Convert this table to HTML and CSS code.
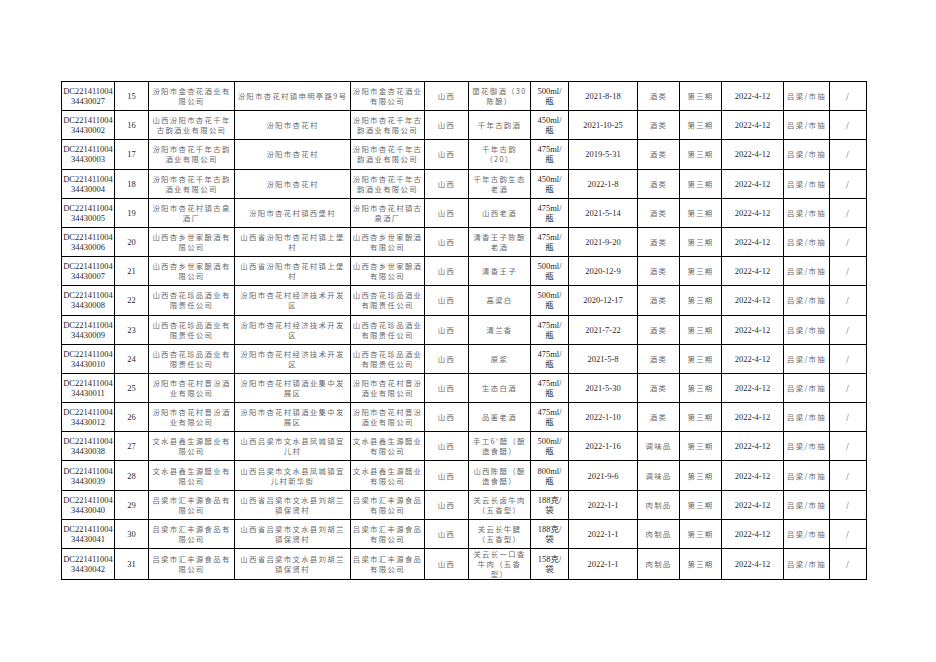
FILE: index.html
```html
<!DOCTYPE html>
<html lang="zh">
<head>
<meta charset="utf-8">
<title>抽检结果</title>
<link rel="stylesheet" href="styles.css">
</head>
<body>
<div class="page">
<table class="grid">
<colgroup>
<col class="w-code"><col class="w-seq"><col class="w-firm"><col class="w-addr"><col class="w-maker"><col class="w-prov"><col class="w-prod"><col class="w-spec"><col class="w-date"><col class="w-cat"><col class="w-per"><col class="w-chk"><col class="w-src"><col class="w-rem">
</colgroup>
<tbody>
<tr>
<td class="n">DC221411004<br>34430027</td><td class="n">15</td>
<td class="c">汾阳市金杏花酒业有<br>限公司</td><td class="c">汾阳市杏花村镇申明亭路9号</td><td class="c">汾阳市金杏花酒业<br>有限公司</td><td class="c">山西</td>
<td class="c">蘭花御酒（30<br>陈酿）</td><td class="n">500ml/<br>瓶</td><td class="n">2021-8-18</td><td class="c">酒类</td><td class="c">第三期</td><td class="n">2022-4-12</td><td class="c">吕梁/市抽</td><td class="c">/</td>
</tr>
<tr>
<td class="n">DC221411004<br>34430002</td><td class="n">16</td>
<td class="c">山西汾阳市杏花千年<br>古韵酒业有限公司</td><td class="c">汾阳市杏花村</td><td class="c">汾阳市杏花千年古<br>韵酒业有限公司</td><td class="c">山西</td>
<td class="c">千年古韵酒</td><td class="n">450ml/<br>瓶</td><td class="n">2021-10-25</td><td class="c">酒类</td><td class="c">第三期</td><td class="n">2022-4-12</td><td class="c">吕梁/市抽</td><td class="c">/</td>
</tr>
<tr>
<td class="n">DC221411004<br>34430003</td><td class="n">17</td>
<td class="c">汾阳市杏花千年古韵<br>酒业有限公司</td><td class="c">汾阳市杏花村</td><td class="c">汾阳市杏花千年古<br>韵酒业有限公司</td><td class="c">山西</td>
<td class="c">千年古韵<br>（20）</td><td class="n">475ml/<br>瓶</td><td class="n">2019-5-31</td><td class="c">酒类</td><td class="c">第三期</td><td class="n">2022-4-12</td><td class="c">吕梁/市抽</td><td class="c">/</td>
</tr>
<tr>
<td class="n">DC221411004<br>34430004</td><td class="n">18</td>
<td class="c">汾阳市杏花千年古韵<br>酒业有限公司</td><td class="c">汾阳市杏花村</td><td class="c">汾阳市杏花千年古<br>韵酒业有限公司</td><td class="c">山西</td>
<td class="c">千年古韵生态<br>老酒</td><td class="n">450ml/<br>瓶</td><td class="n">2022-1-8</td><td class="c">酒类</td><td class="c">第三期</td><td class="n">2022-4-12</td><td class="c">吕梁/市抽</td><td class="c">/</td>
</tr>
<tr>
<td class="n">DC221411004<br>34430005</td><td class="n">19</td>
<td class="c">汾阳市杏花村镇古泉<br>酒厂</td><td class="c">汾阳市杏花村镇西堡村</td><td class="c">汾阳市杏花村镇古<br>泉酒厂</td><td class="c">山西</td>
<td class="c">山西老酒</td><td class="n">475ml/<br>瓶</td><td class="n">2021-5-14</td><td class="c">酒类</td><td class="c">第三期</td><td class="n">2022-4-12</td><td class="c">吕梁/市抽</td><td class="c">/</td>
</tr>
<tr>
<td class="n">DC221411004<br>34430006</td><td class="n">20</td>
<td class="c">山西杏乡世家酿酒有<br>限公司</td><td class="c">山西省汾阳市杏花村镇上堡<br>村</td><td class="c">山西杏乡世家酿酒<br>有限公司</td><td class="c">山西</td>
<td class="c">清香王子陈酿<br>老酒</td><td class="n">475ml/<br>瓶</td><td class="n">2021-9-20</td><td class="c">酒类</td><td class="c">第三期</td><td class="n">2022-4-12</td><td class="c">吕梁/市抽</td><td class="c">/</td>
</tr>
<tr>
<td class="n">DC221411004<br>34430007</td><td class="n">21</td>
<td class="c">山西杏乡世家酿酒有<br>限公司</td><td class="c">山西省汾阳市杏花村镇上堡<br>村</td><td class="c">山西杏乡世家酿酒<br>有限公司</td><td class="c">山西</td>
<td class="c">清香王子</td><td class="n">500ml/<br>瓶</td><td class="n">2020-12-9</td><td class="c">酒类</td><td class="c">第三期</td><td class="n">2022-4-12</td><td class="c">吕梁/市抽</td><td class="c">/</td>
</tr>
<tr>
<td class="n">DC221411004<br>34430008</td><td class="n">22</td>
<td class="c">山西杏花珍品酒业有<br>限责任公司</td><td class="c">汾阳市杏花村经济技术开发<br>区</td><td class="c">山西杏花珍品酒业<br>有限责任公司</td><td class="c">山西</td>
<td class="c">高粱白</td><td class="n">500ml/<br>瓶</td><td class="n">2020-12-17</td><td class="c">酒类</td><td class="c">第三期</td><td class="n">2022-4-12</td><td class="c">吕梁/市抽</td><td class="c">/</td>
</tr>
<tr>
<td class="n">DC221411004<br>34430009</td><td class="n">23</td>
<td class="c">山西杏花珍品酒业有<br>限责任公司</td><td class="c">汾阳市杏花村经济技术开发<br>区</td><td class="c">山西杏花珍品酒业<br>有限责任公司</td><td class="c">山西</td>
<td class="c">清兰香</td><td class="n">475ml/<br>瓶</td><td class="n">2021-7-22</td><td class="c">酒类</td><td class="c">第三期</td><td class="n">2022-4-12</td><td class="c">吕梁/市抽</td><td class="c">/</td>
</tr>
<tr>
<td class="n">DC221411004<br>34430010</td><td class="n">24</td>
<td class="c">山西杏花珍品酒业有<br>限责任公司</td><td class="c">汾阳市杏花村经济技术开发<br>区</td><td class="c">山西杏花珍品酒业<br>有限责任公司</td><td class="c">山西</td>
<td class="c">原浆</td><td class="n">475ml/<br>瓶</td><td class="n">2021-5-8</td><td class="c">酒类</td><td class="c">第三期</td><td class="n">2022-4-12</td><td class="c">吕梁/市抽</td><td class="c">/</td>
</tr>
<tr>
<td class="n">DC221411004<br>34430011</td><td class="n">25</td>
<td class="c">汾阳市杏花村晋汾酒<br>业有限公司</td><td class="c">汾阳市杏花村镇酒业集中发<br>展区</td><td class="c">汾阳市杏花村晋汾<br>酒业有限公司</td><td class="c">山西</td>
<td class="c">生态白酒</td><td class="n">475ml/<br>瓶</td><td class="n">2021-5-30</td><td class="c">酒类</td><td class="c">第三期</td><td class="n">2022-4-12</td><td class="c">吕梁/市抽</td><td class="c">/</td>
</tr>
<tr>
<td class="n">DC221411004<br>34430012</td><td class="n">26</td>
<td class="c">汾阳市杏花村晋汾酒<br>业有限公司</td><td class="c">汾阳市杏花村镇酒业集中发<br>展区</td><td class="c">汾阳市杏花村晋汾<br>酒业有限公司</td><td class="c">山西</td>
<td class="c">品鉴老酒</td><td class="n">475ml/<br>瓶</td><td class="n">2022-1-10</td><td class="c">酒类</td><td class="c">第三期</td><td class="n">2022-4-12</td><td class="c">吕梁/市抽</td><td class="c">/</td>
</tr>
<tr>
<td class="n">DC221411004<br>34430038</td><td class="n">27</td>
<td class="c">文水县鑫生源醋业有<br>限公司</td><td class="c">山西吕梁市文水县凤城镇宜<br>儿村</td><td class="c">文水县鑫生源醋业<br>有限公司</td><td class="c">山西</td>
<td class="c">手工6°醋（酿<br>造食醋）</td><td class="n">500ml/<br>瓶</td><td class="n">2022-1-16</td><td class="c">调味品</td><td class="c">第三期</td><td class="n">2022-4-12</td><td class="c">吕梁/市抽</td><td class="c">/</td>
</tr>
<tr>
<td class="n">DC221411004<br>34430039</td><td class="n">28</td>
<td class="c">文水县鑫生源醋业有<br>限公司</td><td class="c">山西吕梁市文水县凤城镇宜<br>儿村新华街</td><td class="c">文水县鑫生源醋业<br>有限公司</td><td class="c">山西</td>
<td class="c">山西陈醋（酿<br>造食醋）</td><td class="n">800ml/<br>瓶</td><td class="n">2021-9-6</td><td class="c">调味品</td><td class="c">第三期</td><td class="n">2022-4-12</td><td class="c">吕梁/市抽</td><td class="c">/</td>
</tr>
<tr>
<td class="n">DC221411004<br>34430040</td><td class="n">29</td>
<td class="c">吕梁市汇丰源食品有<br>限公司</td><td class="c">山西省吕梁市文水县刘胡兰<br>镇保贤村</td><td class="c">吕梁市汇丰源食品<br>有限公司</td><td class="c">山西</td>
<td class="c">关云长卤牛肉<br>（五香型）</td><td class="n">188克/<br>袋</td><td class="n">2022-1-1</td><td class="c">肉制品</td><td class="c">第三期</td><td class="n">2022-4-12</td><td class="c">吕梁/市抽</td><td class="c">/</td>
</tr>
<tr>
<td class="n">DC221411004<br>34430041</td><td class="n">30</td>
<td class="c">吕梁市汇丰源食品有<br>限公司</td><td class="c">山西省吕梁市文水县刘胡兰<br>镇保贤村</td><td class="c">吕梁市汇丰源食品<br>有限公司</td><td class="c">山西</td>
<td class="c">关云长牛腱<br>（五香型）</td><td class="n">188克/<br>袋</td><td class="n">2022-1-1</td><td class="c">肉制品</td><td class="c">第三期</td><td class="n">2022-4-12</td><td class="c">吕梁/市抽</td><td class="c">/</td>
</tr>
<tr class="tall">
<td class="n">DC221411004<br>34430042</td><td class="n">31</td>
<td class="c">吕梁市汇丰源食品有<br>限公司</td><td class="c">山西省吕梁市文水县刘胡兰<br>镇保贤村</td><td class="c">吕梁市汇丰源食品<br>有限公司</td><td class="c">山西</td>
<td class="c">关云长一口香<br>牛肉（五香<br>型）</td><td class="n">158克/<br>袋</td><td class="n">2022-1-1</td><td class="c">肉制品</td><td class="c">第三期</td><td class="n">2022-4-12</td><td class="c">吕梁/市抽</td><td class="c">/</td>
</tr>
</tbody>
</table>
</div>
</body>
</html>
```
FILE: styles.css
```css
html, body {
  margin: 0;
  padding: 0;
  background: #ffffff;
}

.page {
  padding: 81px 0 0 61px;
}

.grid {
  border-collapse: collapse;
  table-layout: fixed;
  width: 806px;
}

.w-code { width: 53px; }
.w-seq { width: 34px; }
.w-firm { width: 86px; }
.w-addr { width: 116px; }
.w-maker { width: 74px; }
.w-prov { width: 44px; }
.w-prod { width: 62px; }
.w-spec { width: 38px; }
.w-date { width: 69px; }
.w-cat { width: 42px; }
.w-per { width: 42px; }
.w-chk { width: 62px; }
.w-src { width: 46px; }
.w-rem { width: 37px; }

.grid tr {
  height: 29.2px;
}

.grid tr.tall {
  height: 30.4px;
}

.grid td {
  border: 1px solid #000;
  padding: 0;
  text-align: center;
  vertical-align: middle;
  white-space: nowrap;
  overflow: hidden;
  line-height: 10px;
}

.n {
  font-family: "Liberation Serif", "Noto Sans CJK SC", serif;
  font-size: 8.5px;
  color: #2a2a2a;
}

.c {
  font-family: "Noto Sans CJK SC", "Noto Sans", sans-serif;
  font-size: 7.4px;
  letter-spacing: 1.3px;
  color: #6a6a6a;
}
```
